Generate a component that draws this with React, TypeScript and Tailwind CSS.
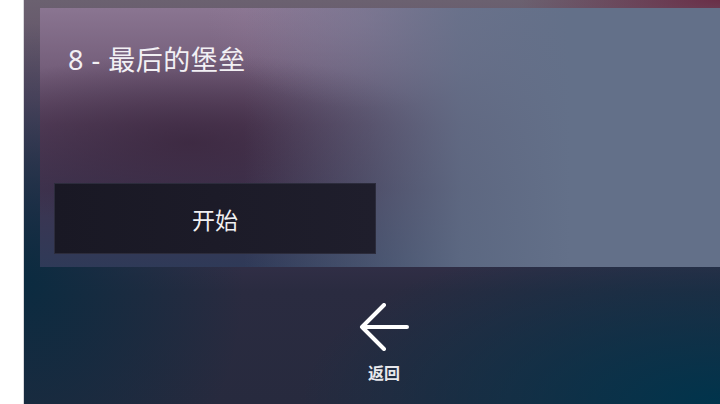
import React from "react";

export default function App() {
  return (
    <div
      className="w-[720px] h-[404px] flex overflow-hidden bg-white"
      style={{ fontFamily: '"Noto Sans", "Noto Sans CJK SC", sans-serif' }}
    >
      <div className="w-[24px] shrink-0 bg-white border-r border-[#d8d8dc]" />
      <div className="flex-1 flex flex-col bg-[radial-gradient(ellipse_420px_180px_at_100%_100%,#00344c_0%,transparent_100%),radial-gradient(ellipse_220px_260px_at_0%_70%,#0b2b40_0%,transparent_100%),radial-gradient(ellipse_200px_40px_at_100%_0%,#6a2f48_0%,transparent_100%),linear-gradient(to_bottom,#6b6170_0%,#5e4a64_25%,#3c3450_55%,#2a2b40_72%,#272a3e_100%)]">
        <div className="ml-[16px] mt-[8px] h-[259px] flex flex-col bg-[linear-gradient(to_right,transparent_0%,transparent_30%,rgba(99,112,137,0.45)_48%,rgba(99,112,137,0.85)_62%,#637089_78%),radial-gradient(ellipse_160px_90px_at_48%_4%,rgba(150,130,160,0.5)_0%,transparent_100%),radial-gradient(ellipse_260px_90px_at_22%_52%,rgba(55,35,58,0.7)_0%,transparent_100%),linear-gradient(to_bottom,#8a7591_0%,#76607c_22%,#55405c_45%,#3e3450_70%,#2f3a58_100%)]">
          <div className="pl-[28px] pt-[34px] text-[27px] leading-[36px] text-[#f2f0f4] tracking-[0.5px]">
            8 - 最后的堡垒
          </div>
          <div className="ml-[14px] mt-[105px] w-[322px] h-[71px] flex items-center justify-center pt-[4px] bg-[linear-gradient(to_right,#191824,#1f1e2c)] border border-[#2c2c3c] text-[23px] text-[#f0f0f2]">
            开始
          </div>
        </div>
        <div className="flex-1 flex flex-col items-center pl-[24px] pt-[36px]">
          <svg width="50" height="48" viewBox="0 0 50 48" fill="none">
            <path
              d="M25 2 L3 24 L25 46 M3 24 L48 24"
              stroke="#ffffff"
              strokeWidth="4"
              strokeLinecap="round"
              strokeLinejoin="round"
            />
          </svg>
          <div className="mt-[13px] text-[16px] leading-[18px] font-bold text-[#e8e8ec]">
            返回
          </div>
        </div>
      </div>
    </div>
  );
}
